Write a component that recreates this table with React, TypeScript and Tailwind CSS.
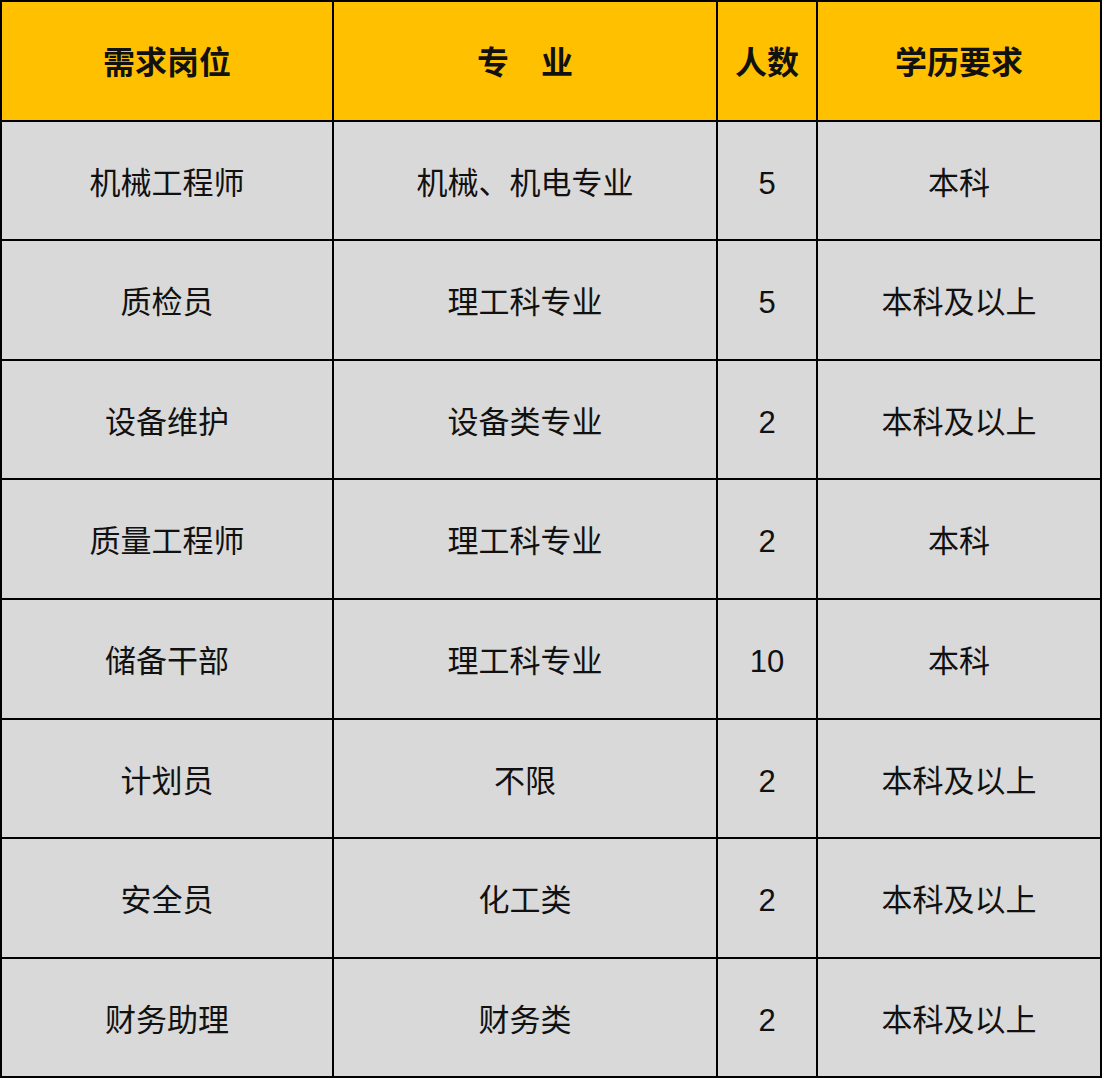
const rows = [
  ['机械工程师', '机械、机电专业', '5', '本科'],
  ['质检员', '理工科专业', '5', '本科及以上'],
  ['设备维护', '设备类专业', '2', '本科及以上'],
  ['质量工程师', '理工科专业', '2', '本科'],
  ['储备干部', '理工科专业', '10', '本科'],
  ['计划员', '不限', '2', '本科及以上'],
  ['安全员', '化工类', '2', '本科及以上'],
  ['财务助理', '财务类', '2', '本科及以上'],
];

const headers = ['需求岗位', '专\u2003业', '人数', '学历要求'];

const App = () => {
  return (
    <div className="w-[1106px] h-[1082px] bg-white">
      <div
        className="grid grid-cols-[332px_384px_100px_284px] w-[1102px] border-l-2 border-t-2 border-black text-[#111]"
        style={{ fontFamily: '"Liberation Sans", "Noto Sans CJK SC", sans-serif' }}
      >
        {/* Header */}
        {headers.map((h) => (
          <div
            key={h}
            className="h-[119.6px] flex items-center justify-center bg-[#ffc000] border-r-2 border-b-2 border-black text-[32px] font-bold pt-[5px]"
          >
            {h}
          </div>
        ))}

        {/* Body */}
        {rows.map((row) =>
          row.map((cell, i) => (
            <div
              key={row[0] + i}
              className="h-[119.6px] flex items-center justify-center bg-[#d9d9d9] border-r-2 border-b-2 border-black text-[31px] pt-[7px]"
            >
              {cell}
            </div>
          ))
        )}
      </div>
    </div>
  );
};

export default App;
